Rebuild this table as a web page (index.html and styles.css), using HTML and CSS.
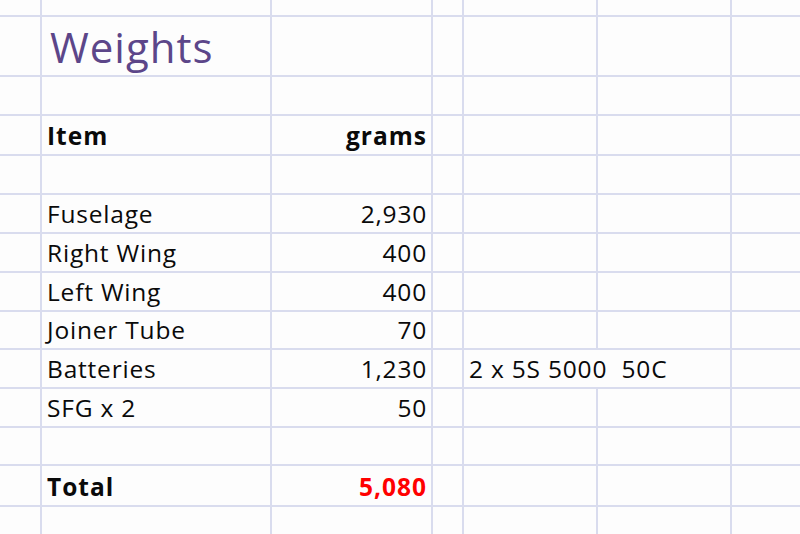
FILE: index.html
```html
<!DOCTYPE html>
<html>
<head>
<meta charset="utf-8">
<link rel="stylesheet" href="styles.css">
</head>
<body>
<div class="sheet">
  <!-- row 0 -->
  <div class="c"></div><div class="c"></div><div class="c"></div><div class="c"></div><div class="c"></div><div class="c"></div><div class="c"></div>
  <!-- row 1 -->
  <div class="c"></div><div class="c title">Weights</div><div class="c"></div><div class="c"></div><div class="c"></div><div class="c"></div><div class="c"></div>
  <!-- row 2 -->
  <div class="c"></div><div class="c"></div><div class="c"></div><div class="c"></div><div class="c"></div><div class="c"></div><div class="c"></div>
  <!-- row 3 -->
  <div class="c"></div><div class="c txt bold">Item</div><div class="c txt bold num">grams</div><div class="c"></div><div class="c"></div><div class="c"></div><div class="c"></div>
  <!-- row 4 -->
  <div class="c"></div><div class="c"></div><div class="c"></div><div class="c"></div><div class="c"></div><div class="c"></div><div class="c"></div>
  <!-- row 5 -->
  <div class="c"></div><div class="c txt">Fuselage</div><div class="c txt num">2,930</div><div class="c"></div><div class="c"></div><div class="c"></div><div class="c"></div>
  <!-- row 6 -->
  <div class="c"></div><div class="c txt">Right Wing</div><div class="c txt num">400</div><div class="c"></div><div class="c"></div><div class="c"></div><div class="c"></div>
  <!-- row 7 -->
  <div class="c"></div><div class="c txt">Left Wing</div><div class="c txt num">400</div><div class="c"></div><div class="c"></div><div class="c"></div><div class="c"></div>
  <!-- row 8 -->
  <div class="c"></div><div class="c txt">Joiner Tube</div><div class="c txt num">70</div><div class="c"></div><div class="c"></div><div class="c"></div><div class="c"></div>
  <!-- row 9 -->
  <div class="c"></div><div class="c txt">Batteries</div><div class="c txt num">1,230</div><div class="c"></div><div class="c txt span2">2 x 5S 5000  50C</div><div class="c"></div>
  <!-- row 10 -->
  <div class="c"></div><div class="c txt">SFG x 2</div><div class="c txt num">50</div><div class="c"></div><div class="c"></div><div class="c"></div><div class="c"></div>
  <!-- row 11 -->
  <div class="c"></div><div class="c"></div><div class="c"></div><div class="c"></div><div class="c"></div><div class="c"></div><div class="c"></div>
  <!-- row 12 -->
  <div class="c"></div><div class="c txt bold">Total</div><div class="c txt bold num red">5,080</div><div class="c"></div><div class="c"></div><div class="c"></div><div class="c"></div>
  <!-- row 13 -->
  <div class="c"></div><div class="c"></div><div class="c"></div><div class="c"></div><div class="c"></div><div class="c"></div><div class="c"></div>
</div>
</body>
</html>
```

FILE: styles.css
```css
html, body {
  margin: 0;
  padding: 0;
  width: 800px;
  height: 534px;
  overflow: hidden;
  background: #fdfdfd;
}

.sheet {
  display: grid;
  width: 800px;
  height: 534px;
  background: #d9dcee;
  gap: 2px;
  grid-template-columns: 40px 228px 159px 29px 132px 132px 1fr;
  grid-template-rows: 15px 58px 37px 38px 37px 37px 37px 37px 36px 37px 37px 36px 39px 1fr;
  font-family: "Open Sans", "Noto Sans", sans-serif;
  color: #0a0a0a;
}

.c {
  background: #fdfdfd;
  display: flex;
  align-items: flex-end;
  min-width: 0;
  overflow: visible;
  white-space: pre;
}

.txt {
  font-size: 24.5px;
  line-height: 24px;
  font-weight: 500;
  padding: 0 5px 6px 5px;
  letter-spacing: 0.8px;
}

.num {
  justify-content: flex-end;
  padding-right: 4px;
}

.title {
  font-size: 42px;
  line-height: 42px;
  padding: 0 0 7px 8px;
  color: #5c4689;
  letter-spacing: 1px;
}

.bold {
  font-weight: 700;
  letter-spacing: 1px;
}

.red {
  color: #ff0000;
}

.span2 {
  grid-column: span 2;
}
```
